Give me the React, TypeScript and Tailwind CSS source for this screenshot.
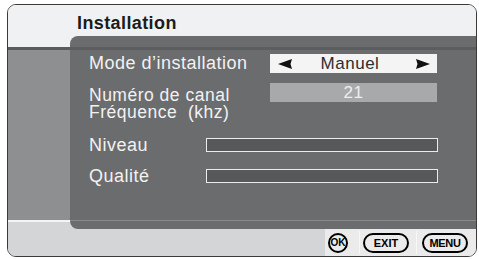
import React from "react";

const font = { fontFamily: '"Liberation Sans", Arial, sans-serif' };

function LeftArrow() {
  return (
    <svg width="14" height="10" viewBox="0 0 14 10" className="shrink-0">
      <polygon points="0,5 14,0 12.5,5 14,10" fill="#111" />
    </svg>
  );
}
function RightArrow() {
  return (
    <svg width="14" height="10" viewBox="0 0 14 10" className="shrink-0">
      <polygon points="14,5 0,0 1.5,5 0,10" fill="#111" />
    </svg>
  );
}

export default function App() {
  return (
    <div className="w-[479px] h-[259px] bg-white pt-[4px] pl-[7px]" style={font}>
      <div className="relative w-[470px] h-[253px] border border-[#3a3a3a] rounded-[9px] overflow-hidden flex flex-col">
        <div className="h-[42px] bg-[#f0f1f3] pl-[69px] pt-[7px]">
          <span className="text-[18px] leading-[22px] font-bold tracking-[0.4px] text-[#1c1c1c]">Installation</span>
        </div>
        <div className="h-[3px] bg-[#5a5b5d]" />
        <div className="h-[170px] bg-[#8e8f91]" />
        <div className="h-[2px] bg-[#f4f4f4]" />
        <div className="h-[34px] bg-[#d4d5d6] flex">
          <div className="w-[317px] shrink-0" />
          <div className="flex-1 bg-[#ebebeb] flex items-start pt-[9px]">
            <div className="w-[35px] shrink-0 flex border-r border-[#f7f7f7] h-[23px] pt-[2px] pl-[3px]">
              <div className="w-[20px] h-[20px] shrink-0 rounded-full border-2 border-black flex items-center justify-center text-[10px] font-bold leading-none text-black">OK</div>
            </div>
            <div className="w-[57px] shrink-0 flex border-r border-[#f7f7f7] h-[23px] pt-[2px] pl-[3px]">
              <div className="w-[46px] h-[20px] shrink-0 rounded-full border-2 border-black flex items-center justify-center text-[11px] font-bold leading-none text-black">EXIT</div>
            </div>
            <div className="pl-[5px] pt-[2px]">
              <div className="w-[46px] h-[20px] shrink-0 rounded-full border-2 border-black flex items-center justify-center text-[11px] font-bold leading-none tracking-[-0.3px] text-black">MENU</div>
            </div>
          </div>
        </div>

        <div className="absolute left-[62px] top-[31px] right-0 h-[193px] bg-[#6b6c6e] rounded-l-[8px] flex flex-col pt-[11px] text-[#f2f2f2] text-[18px] tracking-[0.5px]">
          <div className="h-[3px] bg-[#5c5d5f]" />
          <div className="mt-[4px] flex items-center pl-[19px]">
            <div className="w-[181px] leading-[19px] whitespace-nowrap">Mode d’installation</div>
            <div className="w-[167px] h-[19px] bg-[#f4f4f4] flex items-center justify-between pl-[8px] pr-[7px]">
              <LeftArrow />
              <span className="text-[17px] leading-none text-[#2e2e2e] -ml-[8px]">Manuel</span>
              <RightArrow />
            </div>
          </div>
          <div className="mt-[10px] flex items-start pl-[19px]">
            <div className="w-[181px] text-[17.5px] leading-[17px] pt-[4px] whitespace-nowrap">
              <div>Numéro de canal</div>
              <div>Fréquence&nbsp; (khz)</div>
            </div>
            <div className="w-[167px] h-[19px] bg-[#a8a9ab] flex items-center justify-center text-[17px] leading-none text-[#eeeeee]">21</div>
          </div>
          <div className="mt-[15px] flex items-start pl-[19px]">
            <div className="w-[117px] leading-[19px]">Niveau</div>
            <div className="mt-[2px] w-[232px] h-[14px] border-[1.5px] border-[#ececec] bg-[#575859]" />
          </div>
          <div className="mt-[12px] flex items-start pl-[19px]">
            <div className="w-[117px] leading-[19px]">Qualité</div>
            <div className="mt-[2px] w-[232px] h-[14px] border-[1.5px] border-[#ececec] bg-[#575859]" />
          </div>
          <div className="flex-1" />
          <div className="h-[1px] bg-[#8a8b8d]" />
          <div className="h-[8px]" />
        </div>
      </div>
    </div>
  );
}
